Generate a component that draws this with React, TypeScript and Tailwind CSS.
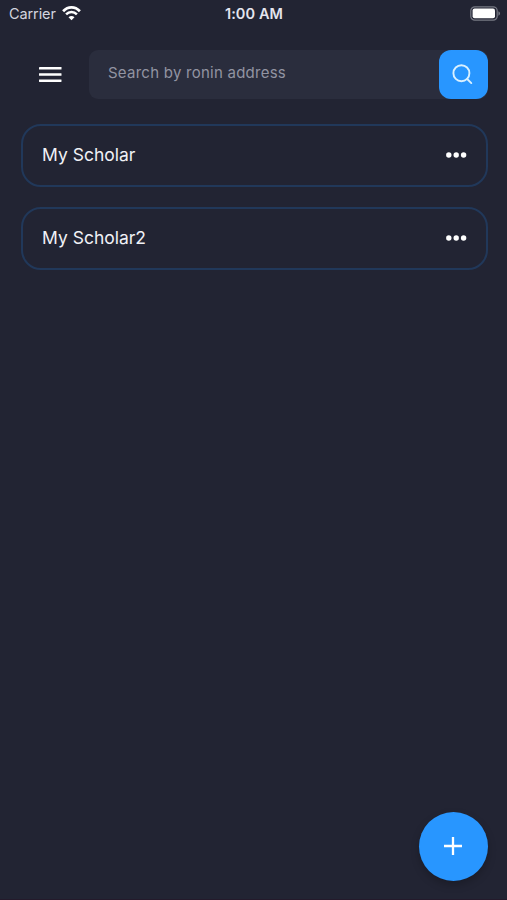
const scholars = ["My Scholar", "My Scholar2"];

function StatusBar() {
  return (
    <header className="grid h-[27px] grid-cols-3 items-center text-[14.5px] leading-none text-[#e4e5ee]">
      <div className="flex items-center gap-[6px] pl-[9px]">
        <span className="pt-px tracking-[-0.1px] text-[#d3d4df]">Carrier</span>
        <svg width="19" height="15" viewBox="0 0 19 15" fill="none" stroke="#fff">
          <path d="M1.1 5.3C6 .1 13 .1 17.9 5.3" strokeWidth="2.7" />
          <path d="M4.1 8.4c3-3.1 7.8-3.1 10.8 0" strokeWidth="2.5" />
          <path d="M6.5 11.2c1.8-1.7 4.2-1.7 6 0l-3 3z" fill="#fff" stroke="none" />
        </svg>
      </div>
      <span className="pt-px pl-px text-center font-semibold tracking-[0.1px] whitespace-nowrap">1:00 AM</span>
      <div className="flex justify-end pr-[6px]">
        <svg width="31" height="15" viewBox="0 0 31 15" fill="none">
          <rect x=".8" y=".8" width="26.4" height="13.4" rx="4" stroke="#777984" strokeWidth="1.2" />
          <rect x="2.6" y="2.6" width="22.4" height="9.6" rx="2" fill="#fff" />
          <path d="M28.4 5.3c2.2.8 2.2 3.6 0 4.4z" fill="#777984" />
        </svg>
      </div>
    </header>
  );
}

function SearchBar() {
  return (
    <div className="mt-[23px] flex h-[49px] pr-[19.5px] pl-[38.5px]">
      <button aria-label="Menu" className="mr-[27px] flex items-center">
        <svg width="23" height="16" viewBox="0 0 23 16" fill="#fff">
          <rect y="0" width="22.5" height="2.6" rx=".4" />
          <rect y="6.2" width="22.5" height="2.6" rx=".4" />
          <rect y="12.4" width="22.5" height="2.6" rx=".4" />
        </svg>
      </button>
      <div className="flex flex-1 rounded-[9px] bg-[#2a2d3d]">
        <span className="flex-1 pt-[13px] pl-[19.5px] text-[15px] leading-5 tracking-[0.25px] whitespace-nowrap text-[#9294a2]">
          Search by ronin address
        </span>
        <button aria-label="Search" className="flex w-[49px] items-center justify-center rounded-[12px] bg-[#2896ff] pr-px">
          <svg width="21" height="21" viewBox="0 0 21 21" fill="none" stroke="#d9f0ff" strokeWidth="1.9" strokeLinecap="round">
            <circle cx="9.4" cy="9.2" r="8" />
            <path d="m15.2 15 4.1 4.1" />
          </svg>
        </button>
      </div>
    </div>
  );
}

function ScholarCard({ name }: { name: string }) {
  return (
    <li className="flex h-[63px] items-center justify-between rounded-[20px] border-2 border-[#21385a] pr-[19px] pl-[19.5px]">
      <span className="text-[17.5px] leading-6 text-[#f0f1f6]">{name}</span>
      <button aria-label="More">
        <svg width="21" height="6" viewBox="0 0 21 6" fill="#fff">
          <circle cx="2.8" cy="3" r="2.7" />
          <circle cx="10.2" cy="3" r="2.7" />
          <circle cx="17.6" cy="3" r="2.7" />
        </svg>
      </button>
    </li>
  );
}

export default function App() {
  return (
    <main className="flex h-[900px] w-[507px] flex-col border-b border-[#241a2b] bg-[#222433] font-['Inter',sans-serif]">
      <StatusBar />
      <SearchBar />
      <ul className="mt-[24.5px] flex flex-col gap-5 pr-[19.5px] pl-[20.5px]">
        {scholars.map((name) => (
          <ScholarCard key={name} name={name} />
        ))}
      </ul>
      <button
        aria-label="Add scholar"
        className="mt-auto mr-[19.5px] mb-[18.5px] flex size-[69px] items-center justify-center self-end rounded-full bg-[#2896ff] shadow-[0_4px_8px_rgba(0,0,0,0.22)]"
      >
        <svg width="18" height="18" viewBox="0 0 18 18" stroke="#fff" strokeWidth="2.3">
          <path d="M9 0v18M0 9h18" />
        </svg>
      </button>
    </main>
  );
}
